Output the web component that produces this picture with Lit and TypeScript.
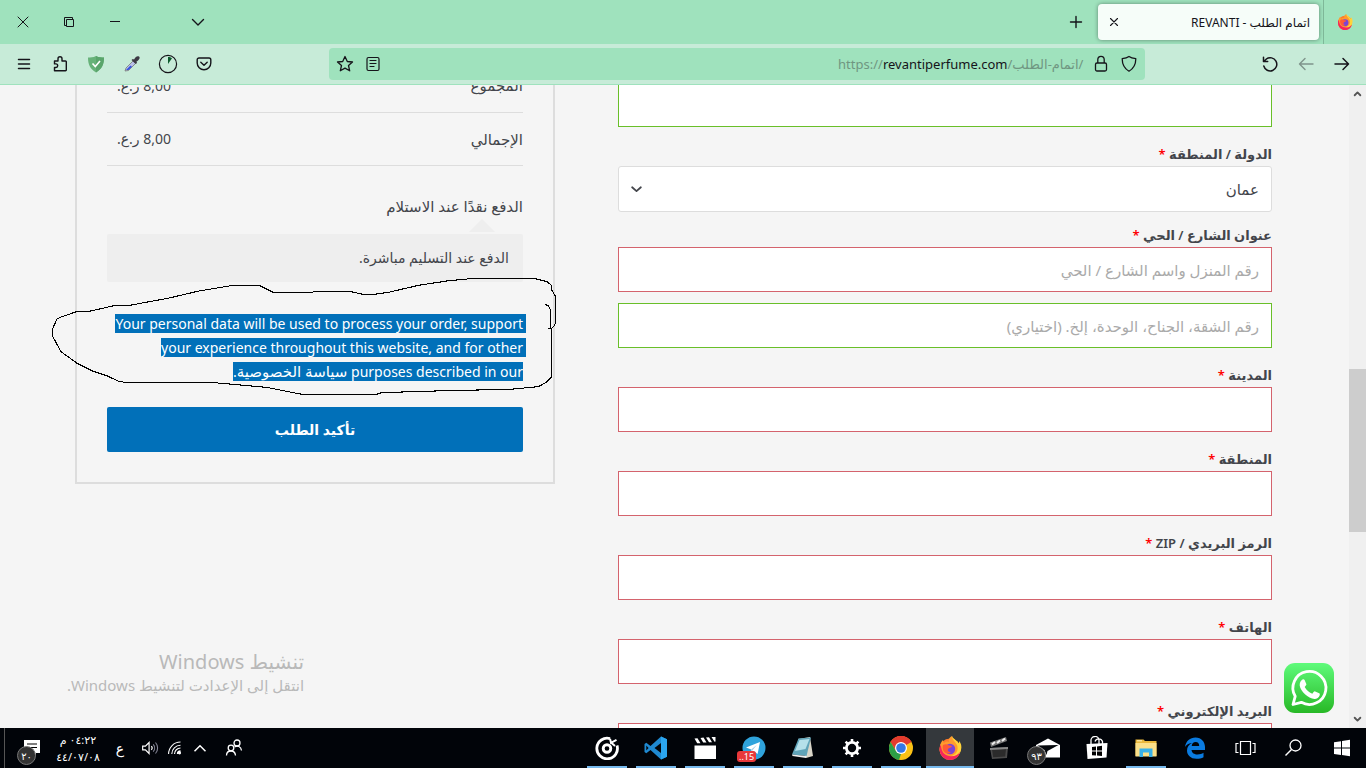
import { LitElement, html, css, svg, nothing } from "lit";
import { customElement, property } from "lit/decorators.js";

const line = (d: string, w = 1.3) =>
  svg`<path d=${d} fill="none" stroke="currentColor" stroke-width=${w} stroke-linecap="round" stroke-linejoin="round"/>`;

const FLAME = svg`
  <circle cx="12" cy="13" r="10.5" fill="#ff7a2a"/>
  <path d="M2 11C2 8 3.500 5.500 5 4c0 1.500.5 2.500 1 3 2-2 4-1.500 5-1C10 3 12 1 14 0c0 4 8 4 8.500 13a10.500 10.500 0 0 1-21 1z" fill="#ff9a2e"/>
  <path d="M14 0c0 4 3 5 5 9 2 5-1 10-6 11 5 1 9-1 10-6 1-4 0-7-2-9 0 1 0 2-.5 2.500C19 4 15 3 14 0z" fill="#ffd43a"/>
  <path d="M1.500 13c0 6 4.500 11 10.500 11 5 0 9-3 10-8-3 4-7 5-11 4-5-1-8-5-8-11-1 1-1.500 2-1.500 4z" fill="#f5265d"/>
  <circle cx="12" cy="13" r="5.200" fill="#7a43d6"/>
  <path d="M5 9c2-1 4-1 6 .5 2 0 3 .5 3 1-1 1.500-3 1-4 2.500-1 2 1 3.500 3 3-3 3-7 1-8-2-.5-2-.5-3.500 0-5z" fill="#ff5a36"/>`;

const ICONS: Record<string, unknown> = {
  close: line("M7 7l10 10M17 7L7 17", 1),
  restore: svg`<path d="M7.500 15.500v-8h8v2M9.500 9.500h7v7h-7zM7.500 15.500h2" fill="none" stroke="currentColor" stroke-width="1"/>`,
  minimize: svg`<path d="M7 11.500h10" stroke="currentColor" stroke-width="1"/>`,
  chevron: line("M6.500 9.500l5.500 5.500 5.500-5.500", 1.4),
  caret: line("M7 10l5 4.500 5-4.500", 2),
  plus: line("M12 6.500v11M6.500 12h11", 1.4),
  x: line("M8.500 8.500l7 7M15.500 8.500l-7 7", 1.1),
  menu: line("M6.500 7.500h11M6.500 12h11M6.500 16.500h11", 1.5),
  puzzle: line("M6.500 9h3.500V6.800a2 2 0 0 1 4 0V9h3.500a.8.8 0 0 1 .8.800V18a.8.8 0 0 1-.8.800H6.500v-3.300h1.400a1.800 1.800 0 0 0 0-3.600H6.500z", 1.4),
  shieldcheck: svg`<path d="M12 4c3 1.500 5.500 1.600 8 1.600 0 7-2 11.400-8 14.900-6-3.500-8-7.900-8-14.900 2.500 0 5-.1 8-1.600z" fill="#67b279"/><path d="M12 4c3 1.500 5.500 1.600 8 1.600 0 7-2 11.400-8 14.900z" fill="#5aa56c"/><path d="M8.500 11.500l2.800 3 4.700-5.500" fill="none" stroke="#fff" stroke-width="1.600"/>`,
  dropper: svg`<path d="M5 19l1-3 7-7 2.500 2.500-7 7z" fill="#b9c0e8" stroke="#777" stroke-width=".8"/><path d="M6 18l4.500-4.500 1.500 1.300L8.500 18z" fill="#3350e0"/><path d="M11.500 8l1.300-1 1.200.6c1.500-3 3.500-4 5-3s.3 3.500-2.500 5l.5 1.400-1.300 1z" fill="#3d3a44"/>`,
  timer: svg`<circle cx="12" cy="12" r="8.600" fill="none" stroke="currentColor" stroke-width="1.200"/><path d="M12 5v7l4-5.800c-1-.8-2.500-1.200-4-1.200z" fill="#0b5a2c"/>`,
  pocket: line("M7 6h10a1.800 1.800 0 0 1 1.800 1.800V11a6.800 6.800 0 0 1-13.600 0V7.800A1.800 1.800 0 0 1 7 6zM8.800 10.300l3.200 3 3.200-3", 1.4),
  star: line("M12 4.500l2.300 5 5.200.5-4 3.500 1.200 5.300-4.700-2.700-4.700 2.700 1.200-5.300-4-3.500 5.200-.5z", 1.3),
  reader: line("M7.500 5.500h9a1.500 1.500 0 0 1 1.500 1.500v10a1.500 1.500 0 0 1-1.500 1.500h-9A1.500 1.500 0 0 1 6 17V7a1.500 1.500 0 0 1 1.500-1.500zM9 8.500h6M9 11.500h6M9 14.500h4", 1.2),
  lock: line("M8 11h8a1.500 1.500 0 0 1 1.500 1.500v5A1.500 1.500 0 0 1 16 19H8a1.500 1.500 0 0 1-1.500-1.500v-5A1.500 1.500 0 0 1 8 11zM8.800 11V7.500a3.200 3.200 0 0 1 6.400 0V11", 1.3),
  shield: line("M12 4.500c2 1.600 4.500 2 6.800 2.200 0 5-1.800 9.600-6.800 12.500-5-2.900-6.800-7.500-6.800-12.500C7.500 6.500 10 6.100 12 4.500z", 1.3),
  reload: line("M8.300 7A6.600 6.600 0 1 1 5.800 14M5.500 5.300v4.200h4.200M5.500 9.500L8.500 7", 1.5),
  back: line("M19 12H5.500M11 6.500L5.500 12l5.500 5.500", 1.4),
  forward: line("M5 12h13.500M13 6.500l5.500 5.500-5.500 5.500", 1.5),
  firefox: FLAME,
  windows: svg`<path d="M4 6.200l7-1v6.400H4zM12 5l8-1.200v7.800h-8zM4 12.500h7v6.400l-7-1zM12 12.500h8v7.800L12 19z" fill="#fff"/>`,
  search: svg`<circle cx="14.500" cy="9.500" r="5.500" fill="none" stroke="#fff" stroke-width="1.300"/><path d="M10.500 13.500L4.500 19.500" stroke="#fff" stroke-width="1.500"/>`,
  taskview: svg`<path d="M8.500 5.500h10v13h-10zM6.500 7.500H4v9h2.500M20.500 7.500H23v9h-2.500" fill="none" stroke="#fff" stroke-width="1.200"/>`,
  edge: svg`<path d="M2 11C3 5 7 1.500 12.500 1.500 18.500 1.500 22 6 22 11v3H8.500c.3 3 3 4.500 6 4.500 2.500 0 4.500-.8 6-1.700v4.400c-1.800 1-4.300 1.600-7 1.600C7.500 22.800 4 19 4 14.500c0-3.500 2-6 5-7.500-4 .5-6 2.300-7 4zM8.700 10h7.500c0-2.500-1.300-4-3.500-4-2.300 0-3.700 1.500-4 4z" fill="#0a7be0"/>`,
  folder: svg`<path d="M1.500 3.500h8l1.500 1.500h11.500v15h-21z" fill="#e9b83c"/><path d="M1.500 7h21v13.500h-21z" fill="#fbe08a"/><path d="M5.500 12.500h13v8.500h-3.500v-4.500h-6V21H5.500z" fill="#39b1e8"/><path d="M3 4.800h5" stroke="#fff3c0"/>`,
  store: svg`<path d="M1.500 8l21-1-1 14.500-19 1.500z" fill="#fff"/><path d="M6 8V5a4 4 0 0 1 8-1V8M10 5.500a4 4 0 0 1 7.500 0V8" fill="none" stroke="#fff" stroke-width="1.300"/><path d="M7 11l4-.5v4H7zM12 10.400l5-.6v4.700h-5zM7 15.500h4v4l-4-.3zM12 15.500h5v4.600l-5-.5z" fill="#000"/>`,
  mail: svg`<path d="M0 9l12-6.500L24 9v12.500H0z" fill="#fff"/><path d="M1.500 9.500l21-.5-11 6-1 4-2-5z" fill="#05080c"/>`,
  clapdark: svg`<path d="M3 12l18-1-1 11-15 1z" fill="#4a4a4a"/><path d="M5 13.500l14-.6-.8 7.600-12 .8z" fill="#2b2b2b"/><path d="M3 6.500L19 1l1 4L4 11z" fill="#777"/><path d="M5 8.500l3-2.500M10 7l3-2.500M15 5l3-2.500" stroke="#eee" stroke-width="2"/><path d="M3 12l18-1v2l-18 1z" fill="#888"/>`,
  chrome: svg`<circle cx="12" cy="12" r="12" fill="#fbc116"/><path d="M12 12L1.600 6A12 12 0 0 1 22.400 6z" fill="#e33b2e"/><path d="M12 6h10.400A12 12 0 0 0 1.600 6L7 15z" fill="#e33b2e"/><path d="M1.600 6L7 15l5 3-2 5.900A12 12 0 0 1 1.600 6z" fill="#2c9f46"/><circle cx="12" cy="12" r="6" fill="#fff"/><circle cx="12" cy="12" r="4.800" fill="#3578e5"/>`,
  gear: svg`<circle cx="12" cy="12" r="5.600" fill="none" stroke="#fff" stroke-width="2.800"/><path d="M12 3v3M12 18v3M3 12h3M18 12h3M5.600 5.600l2.200 2.200M16.200 16.200l2.200 2.200M18.400 5.600l-2.200 2.200M7.800 16.200l-2.200 2.200" stroke="#fff" stroke-width="2.600"/>`,
  notes: svg`<path d="M7 3l12-2 3 19-7 2z" fill="#d9d5c8"/><path d="M7.500 2.500L20 1.500 15.500 20 1 18.500z" fill="#5fa3b8"/><path d="M8.500 4l10-1-4 10L4 15z" fill="#b5e0ea"/><path d="M1 18.500l14.500 1.500-.5 2L1.500 20z" fill="#eee"/>`,
  telegram: svg`<circle cx="12" cy="12" r="11.500" fill="#2fa3dc"/><path d="M4 11.500l14-5.500-2.400 12-4-3-2 2-.4-3.500z" fill="#fff"/><path d="M9.200 13.500L15 8.800l-4.500 5.500-.8 2.200z" fill="#a9cfe6"/>`,
  clap: svg`<path d="M1.500 9.500h21.500V23H1.500zM1.500 2.500l3-.3 3 5H4.200zM7.500 1.900l3-.3 3 5h-3.300zM13 1.500l3-.3 3 5h-3zM18.500 1h4v4.500l-1 .3z" fill="#fff"/>`,
  vscode: svg`<path d="M17 0.500l6 2.800v17.400l-6 2.800L6.500 14 2.300 17.200.5 16V8l1.800-1.200L6.500 10z" fill="#1f8ad2"/><path d="M17 .5l6 2.800v17.400l-6 2.800z" fill="#2ba5ee"/><path d="M17 7v10l-6.500-5zM2.300 9.500v5L4.600 12z" fill="#02060a"/>`,
  groove: svg`<path d="M15 2.600A10.300 10.300 0 1 0 22 9.500" fill="none" stroke="#fff" stroke-width="2.800"/><circle cx="12" cy="12.500" r="3.800" fill="none" stroke="#fff" stroke-width="2.900"/><path d="M15 2.800l1 4 5.500-3" fill="none" stroke="#fff" stroke-width="2"/><path d="M16 6.500l4 3.500" stroke="#fff" stroke-width="2"/>`,
  people: svg`<g fill="none" stroke="#fff" stroke-width="1.300"><circle cx="15" cy="7" r="3"/><circle cx="9" cy="12" r="2.800"/><path d="M4.500 19.500c0-3 2-4.500 4.500-4.500s4.200 1.500 4.500 4.500M12.500 11c3-2 6.500-.5 7 3.500"/></g>`,
  up: svg`<path d="M6 15.500l6-6 6 6" fill="none" stroke="#fff" stroke-width="1.600"/>`,
  wifi: svg`<g fill="none" stroke="#fff" stroke-width="1.200"><path d="M5 18.500A13 13 0 0 1 18 5.500M8.500 18.500a9.500 9.500 0 0 1 9.500-9.500M11.500 18.500a6.500 6.500 0 0 1 6.500-6.500"/><path d="M15 18.500a3 3 0 0 1 3-3" stroke-width="2"/></g><circle cx="17" cy="17.500" r="1.600" fill="#fff"/>`,
  speaker: svg`<path d="M4 10h3l4-4v12l-4-4H4z" fill="none" stroke="#fff" stroke-width="1.300"/><path d="M13.500 10a3 3 0 0 1 0 4" fill="none" stroke="#fff" stroke-width="1.200"/><path d="M15.500 8a6 6 0 0 1 0 8M18 6a9 9 0 0 1 0 12" fill="none" stroke="#889" stroke-width="1.200"/>`,
  notice: svg`<path d="M7 4h16v13h-4v3l-3-3H7z" fill="#fff"/><path d="M10 8h10M10 11.500h10" stroke="#000" stroke-width="1.200"/>`,
  scrollup: line("M8 14.500l4-4 4 4", 2.6),
  scrolldown: line("M8 9.500l4 4 4-4", 2.6),
};

@customElement("ui-icon")
class UiIcon extends LitElement {
  @property() name = "";
  static styles = css`
    :host { display: inline-flex; width: 24px; height: 24px; flex: none; }
    svg { width: 100%; height: 100%; display: block; }
  `;
  render() {
    return html`<svg viewBox="0 0 24 24" aria-hidden="true">${ICONS[this.name]}</svg>`;
  }
}

interface Field { id: string; label: string; }
const FIELDS: Field[] = [
  { id: "city", label: "المدينة" },
  { id: "state", label: "المنطقة" },
  { id: "zip", label: "الرمز البريدي / ZIP" },
  { id: "phone", label: "الهاتف" },
  { id: "email", label: "البريد الإلكتروني" },
];

const TASKS = [
  { icon: "windows", name: "ابدأ" },
  { icon: "search", name: "بحث" },
  { icon: "taskview", name: "عرض المهام" },
  { icon: "edge", name: "Edge" },
  { icon: "folder", name: "مستكشف الملفات", open: true },
  { icon: "store", name: "المتجر" },
  { icon: "mail", name: "البريد", count: "٩٣" },
  { icon: "clapdark", name: "محرر الفيديو" },
  { icon: "firefox", name: "Firefox", open: true, active: true },
  { icon: "chrome", name: "Chrome", open: true },
  { icon: "gear", name: "الإعدادات", open: true },
  { icon: "notes", name: "المفكرة", open: true },
  { icon: "telegram", name: "Telegram", open: true, badge: "15.." },
  { icon: "clap", name: "الأفلام", open: true },
  { icon: "vscode", name: "VS Code", open: true },
  { icon: "groove", name: "الموسيقى", open: true },
];

@customElement("app-root")
class AppRoot extends LitElement {
  static styles = css`
    :host {
      display: flex;
      flex-direction: column;
      height: 100vh;
      overflow: hidden;
      font-family: "Noto Sans", "DejaVu Sans", sans-serif;
      font-size: 14px;
      color: #43454b;
      background: #f5f5f5;
    }
    * { box-sizing: border-box; }
    button, input, select { font: inherit; color: inherit; margin: 0; }
    button { background: none; border: 0; padding: 0; display: flex; align-items: center; justify-content: center; }
    a { color: inherit; text-decoration: none; }

    .tabs { display: flex; flex: none; height: 44px; background: #9fe2bd; color: #15141a; }
    .pin { width: 43px; display: flex; align-items: center; justify-content: center; border-left: 1px solid #7fb899; }
    .pin ui-icon { width: 16px; height: 16px; }
    .tab { display: flex; align-items: center; justify-content: space-between; width: 221px; margin: 4px 4px 4px 0; padding: 0 9px 0 4px; border-radius: 4px; background: #f6fdf9; box-shadow: 0 0 4px #0006; font-size: 12px; white-space: nowrap; }
    .newtab { width: 44px; }
    .fill { flex: 107; }
    .listtabs { width: 36px; margin-left: 42px; }
    .win { width: 46px; }

    .toolbar { display: flex; flex: none; align-items: center; height: 41px; padding: 0 6px; background: #c7ebd8; border-bottom: 1px solid #9fe2bd; color: #15141a; }
    .tool { width: 36px; height: 32px; }
    .dim { opacity: 0.4; }
    .url { display: flex; align-items: center; flex: 816; height: 32px; padding: 0 2px; border-radius: 4px; background: #9fe2bd; }
    .slot { width: 28px; height: 32px; }
    .address { flex: 1; padding-right: 4px; text-align: right; font-size: 13px; line-height: 20px; color: #6f9681; white-space: nowrap; outline: none; }
    .address b { font-weight: 400; color: #15141a; }

    .view { position: relative; display: flex; flex: 1; min-height: 0; overflow: hidden; }
    .scroll { display: flex; flex-direction: column; align-items: center; width: 17px; background: #f0f0f0; color: #555; }
    .scroll ui-icon { width: 17px; height: 17px; }
    .track { flex: 1; width: 17px; display: flex; flex-direction: column; }
    .before { flex: 267; }
    .thumb { flex: 163; background: #cdcdcd; }
    .after { flex: 179; }

    main { flex: 1; min-width: 0; display: grid; grid-template-columns: 654fr 480fr; column-gap: 63px; align-items: start; padding: 0 77px 0 75px; }
    form { margin-top: -3px; }
    .field { margin-bottom: 13px; }
    .field label { display: block; height: 26px; line-height: 28px; font-size: 13px; font-weight: 600; white-space: nowrap; }
    .field em { font-style: normal; color: #f00; }
    .box { display: block; width: 100%; height: 45px; padding: 0 12px; border: 1px solid #d4636d; border-radius: 0; background: #fff; font-size: 15px; outline: none; }
    .box::placeholder { color: #aaa; opacity: 1; }
    .ok { border-color: #69bf29; }
    .second { margin-top: 11px; }
    .country { margin-bottom: 9px; }
    .pick { display: grid; align-items: center; }
    .pick > * { grid-area: 1 / 1; }
    .pick select { appearance: none; height: 46px; border-color: #ddd; border-radius: 3px; }
    .pick ui-icon { justify-self: end; margin-left: 8px; width: 21px; height: 24px; pointer-events: none; }

    .card { margin-top: -58px; padding: 30px; border: 2px solid #ddd; }
    table { width: 100%; border-collapse: collapse; }
    th, td { height: 53px; padding: 0; border-bottom: 1px solid #ddd; font-weight: 400; }
    th { text-align: right; font-size: 15px; }
    td { text-align: left; padding-left: 10px; }
    .method { margin-top: 28px; line-height: 24px; font-size: 15px; }
    .note { position: relative; margin-top: 16px; padding: 0 14px; line-height: 48px; border-radius: 2px; background: #eee; font-size: 14px; }
    .note::before { content: ""; position: absolute; right: 28px; bottom: calc(100% + 2px); border: 13px solid transparent; border-top: 0; border-bottom-color: #eee; }
    .privacy { margin: 30px 0 23px; line-height: 24px; white-space: nowrap; color: #fff; }
    .privacy a { font-size: 15px; line-height: 20px; }
    .mark { background: #0170b9; }
    .trail { margin-right: -3px; padding-right: 3px; }
    .submit { width: 100%; height: 45px; border-radius: 2px; background: #0170b9; color: #fff; font-weight: 600; }

    .ink { position: absolute; left: 40px; top: 185px; width: 530px; height: 220px; pointer-events: none; }
    .activate { position: absolute; left: 67px; bottom: 32px; color: #b9b9b9; white-space: nowrap; line-height: 22px; font-size: 15px; }
    .activate strong { display: block; font-size: 20px; line-height: 24px; font-weight: 400; }
    .chat { position: absolute; right: 32px; bottom: 15px; width: 50px; height: 50px; }
    .chat svg { display: block; width: 50px; height: 50px; }

    .taskbar { display: flex; flex: none; height: 40px; background: #010409; color: #fff; }
    .apps { display: flex; gap: 1px; }
    .app { position: relative; width: 48px; height: 40px; }
    .app::after { content: ""; position: absolute; left: 4px; right: 4px; bottom: 0; height: 2px; }
    .open::after { background: #76b9ed; }
    .active { background: #34383c; }
    .active::after { left: 0; right: 0; }
    .count { position: absolute; left: 3px; bottom: 3px; display: flex; align-items: center; justify-content: center; width: 19px; height: 19px; border: 1px solid #777; border-radius: 50%; background: #333; font-size: 10px; line-height: 16px; }
    .tray .count { left: 12px; }
    .badge { position: absolute; left: 7px; bottom: 6px; padding: 0 2px; border-radius: 3px; background: #e8383a; font-size: 9px; line-height: 11px; }
    .tray { display: flex; align-items: center; }
    .tray button { height: 40px; }
    .person { width: 44px; }
    .s24 { width: 25px; }
    .lang { width: 34px; }
    .clock { width: 50px; text-align: center; font-size: 11px; line-height: 17px; white-space: nowrap; }
    .s24 ui-icon { width: 22px; height: 22px; }
    .edgebar { width: 5px; align-self: stretch; border-right: 1px solid #555; }
  `;

  private required(label: string, id: string) {
    return html`<label for=${id}>${label} <em>*</em></label>`;
  }

  private tool(icon: string, name: string, cls = "tool") {
    return html`<button class=${cls} aria-label=${name}><ui-icon name=${icon}></ui-icon></button>`;
  }

  render() {
    return html`
      <header class="tabs" dir="rtl">
        <div class="pin"><ui-icon name="firefox"></ui-icon></div>
        <div class="tab"><span>اتمام الطلب - REVANTI</span>${this.tool("x", "إغلاق اللسان", "")}</div>
        ${this.tool("plus", "لسان جديد", "newtab")}
        <div class="fill"></div>
        ${this.tool("chevron", "سرد الألسنة", "listtabs")}
        ${this.tool("minimize", "تصغير", "win")}
        ${this.tool("restore", "استعادة", "win")}
        ${this.tool("close", "إغلاق", "win")}
      </header>

      <nav class="toolbar" dir="rtl">
        ${this.tool("forward", "السابق")}
        ${this.tool("back", "التالي", "tool dim")}
        ${this.tool("reload", "إعادة تحميل")}
        <div class="fill"></div>
        <div class="url">
          ${this.tool("shield", "الحماية", "slot")}
          ${this.tool("lock", "معلومات الموقع", "slot")}
          <div class="address" dir="ltr" role="textbox" aria-label="العنوان" contenteditable="true">https://<b>revantiperfume.com</b>/اتمام-الطلب/</div>
          ${this.tool("reader", "القارئ", "slot")}
          ${this.tool("star", "علّم الصفحة", "slot")}
        </div>
        <div class="fill"></div>
        ${this.tool("pocket", "Pocket")}
        ${this.tool("timer", "المؤقت")}
        ${this.tool("dropper", "لاقط الألوان")}
        ${this.tool("shieldcheck", "مانع الإعلانات")}
        ${this.tool("puzzle", "الامتدادات")}
        ${this.tool("menu", "القائمة")}
      </nav>

      <div class="view" dir="rtl">
        <div class="scroll">
          <ui-icon name="scrollup"></ui-icon>
          <div class="track"><div class="before"></div><div class="thumb"></div><div class="after"></div></div>
          <ui-icon name="scrolldown"></ui-icon>
        </div>
        <main>
          <form>
            <div class="field"><input class="box ok" aria-label="اسم الشركة" /></div>
            <div class="field country">
              ${this.required("الدولة / المنطقة", "country")}
              <div class="pick">
                <select class="box" id="country"><option>عمان</option></select>
                <ui-icon name="caret"></ui-icon>
              </div>
            </div>
            <div class="field">
              ${this.required("عنوان الشارع / الحي", "street")}
              <input class="box" id="street" placeholder="رقم المنزل واسم الشارع / الحي" />
              <input class="box ok second" aria-label="الشقة" placeholder="رقم الشقة، الجناح، الوحدة، إلخ. (اختياري)" />
            </div>
            ${FIELDS.map((f) => html`
              <div class="field">${this.required(f.label, f.id)}<input class="box" id=${f.id} /></div>`)}
          </form>

          <section class="card">
            <table>
              <tr><th>المجموع</th><td>8,00 ر.ع.</td></tr>
              <tr><th>الإجمالي</th><td>8,00 ر.ع.</td></tr>
            </table>
            <div class="method">الدفع نقدًا عند الاستلام</div>
            <div class="note">الدفع عند التسليم مباشرة.</div>
            <div class="privacy">
              <span class="mark trail">Your personal data will be used to process your order, support</span><br />
              <span class="mark trail">your experience throughout this website, and for other</span><br />
              <span class="mark">purposes described in our <a href="#">سياسة الخصوصية</a>.</span>
            </div>
            <button class="submit">تأكيد الطلب</button>
          </section>
        </main>

        <svg class="ink" viewBox="0 0 1568 660" preserveAspectRatio="none" aria-hidden="true">
          <path fill="none" stroke="#000" stroke-width="3.2" shape-rendering="crispEdges"
            d="M1495 103l8 4 8 13v55M1503 175h11l9-10 3-15V80l-12-20-2-15-12-10-20-5-18-5H1285l-75 7-90 14-85 20-45 7h-35l-35-8H815l-15 2H690l-40-20H565l-95 16-92 22-113 21-50 2-70 16-40 2-45 16-10 5-12 28v25l24 45 48 35 45 23 45 15 30 15 25 5h260l155 14 105 21h220l15-5 190-6 190-4 85-8 25-15 14-15V175"/>
        </svg>

        <div class="activate"><strong>تنشيط Windows</strong>انتقل إلى الإعدادت لتنشيط Windows.</div>

        <a class="chat" href="#" aria-label="WhatsApp">
          <svg viewBox="0 0 50 50">
            <defs><linearGradient id="wa" x1="0" y1="0" x2="0" y2="1"><stop offset="0" stop-color="#5ffb7b"/><stop offset="1" stop-color="#28b826"/></linearGradient></defs>
            <rect width="50" height="50" rx="11" fill="url(#wa)"/>
            <path d="M9 41.500l2.200-8.200A16.500 16.500 0 1 1 17.300 39.300z" fill="none" stroke="#fff" stroke-width="2.800" stroke-linejoin="round"/>
            <path d="M18.500 16.500c.6-.2 1.700-.3 2.100.6l1.700 4c.3.700 0 1.200-1.600 3 1.800 3.300 4.200 5.400 7.600 6.700 1.800-2.200 2-2.800 2.900-2.400l4 1.900c.7.400.7.800.5 2-.6 2.500-3.200 3.700-5.200 3.600-6.300-.6-14-7.500-14.800-13.500-.2-2.500 1.200-5.100 2.800-5.900z" fill="#fff"/>
          </svg>
        </a>
      </div>

      <footer class="taskbar" dir="rtl">
        <div class="apps">
          ${TASKS.map((t) => html`
            <button class="app ${t.open ? "open" : ""} ${t.active ? "active" : ""}" aria-label=${t.name}>
              <ui-icon name=${t.icon}></ui-icon>
              ${t.count ? html`<span class="count">${t.count}</span>` : nothing}
              ${t.badge ? html`<span class="badge">${t.badge}</span>` : nothing}
            </button>`)}
        </div>
        <div class="fill"></div>
        <div class="tray">
          ${this.tool("people", "الأشخاص", "person")}
          ${this.tool("up", "الرموز المخفية", "s24")}
          ${this.tool("wifi", "الشبكة", "s24")}
          ${this.tool("speaker", "الصوت", "s24")}
          <button class="lang">ع</button>
          <div class="clock">٠٤:٢٢ م<br />٤٤/٠٧/٠٨</div>
          <button class="app" aria-label="الإشعارات"><ui-icon name="notice"></ui-icon><span class="count">٢٠</span></button>
          <div class="edgebar"></div>
        </div>
      </footer>
    `;
  }
}
